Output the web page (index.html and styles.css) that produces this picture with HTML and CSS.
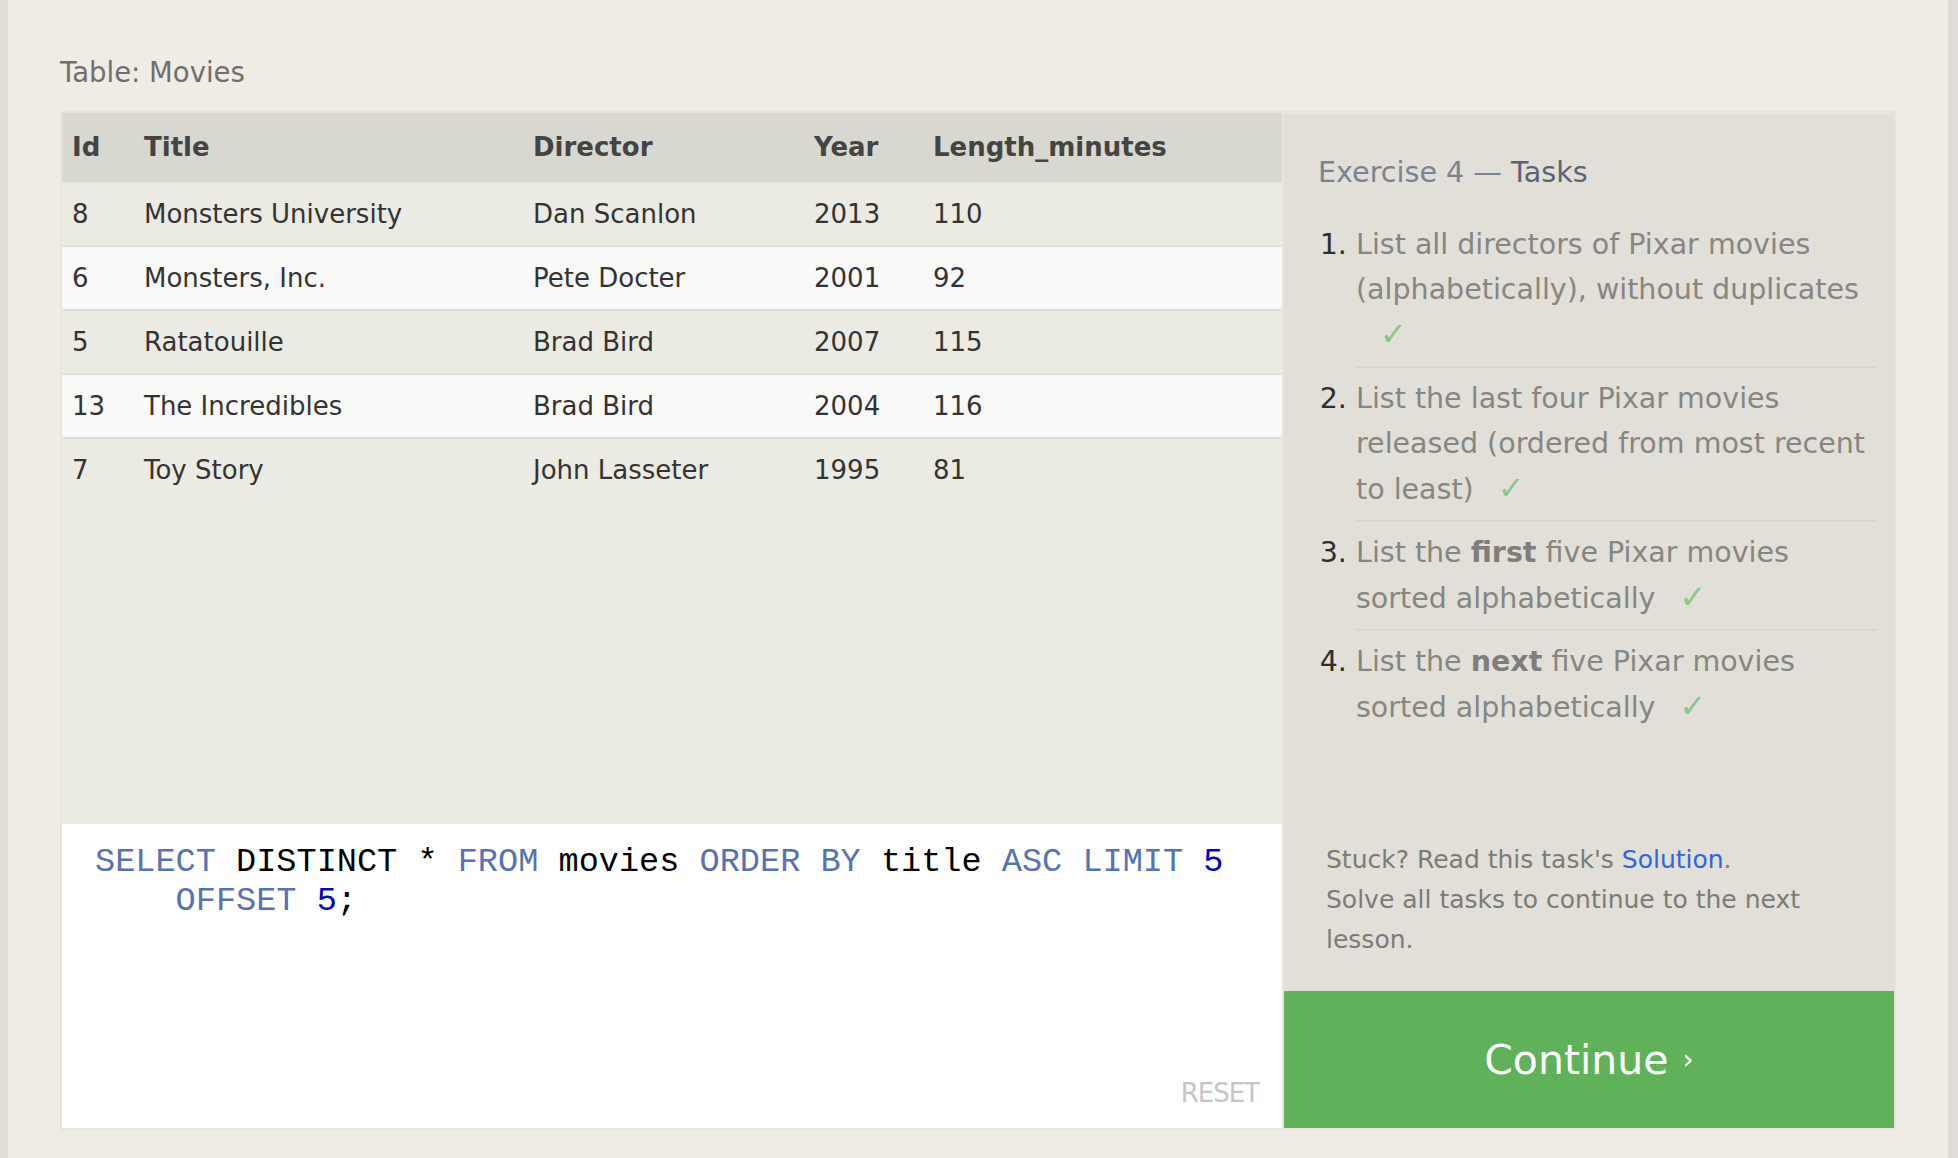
FILE: index.html
```html
<!DOCTYPE html>
<html lang="en">
<head>
<meta charset="utf-8">
<title>SQLBolt - Exercise 4</title>
<link rel="stylesheet" href="styles.css">
</head>
<body>
<div class="page">
  <div class="content">
    <div class="table-label">Table: Movies</div>
    <div class="widget">
      <div class="left">
        <div class="results">
          <table class="movies">
            <colgroup>
              <col class="col-id"><col class="col-title"><col class="col-dir"><col class="col-year"><col class="col-len">
            </colgroup>
            <thead>
              <tr><th>Id</th><th>Title</th><th>Director</th><th>Year</th><th>Length_minutes</th></tr>
            </thead>
            <tbody>
              <tr class="odd"><td>8</td><td>Monsters University</td><td>Dan Scanlon</td><td>2013</td><td>110</td></tr>
              <tr class="even"><td>6</td><td>Monsters, Inc.</td><td>Pete Docter</td><td>2001</td><td>92</td></tr>
              <tr class="odd"><td>5</td><td>Ratatouille</td><td>Brad Bird</td><td>2007</td><td>115</td></tr>
              <tr class="even"><td>13</td><td>The Incredibles</td><td>Brad Bird</td><td>2004</td><td>116</td></tr>
              <tr class="odd"><td>7</td><td>Toy Story</td><td>John Lasseter</td><td>1995</td><td>81</td></tr>
            </tbody>
          </table>
        </div>
        <div class="editor">
          <div class="code">
            <div class="code-line"><span class="kw">SELECT</span> DISTINCT * <span class="kw">FROM</span> movies <span class="kw">ORDER BY</span> title <span class="kw">ASC</span> <span class="kw">LIMIT</span> <span class="num">5</span></div>
            <div class="code-line wrapped"><span class="kw">OFFSET</span> <span class="num">5</span>;</div>
          </div>
          <div class="reset">RESET</div>
        </div>
      </div>
      <div class="tasks">
        <div class="tasks-title"><span class="ex">Exercise 4 —</span> <span class="tt">Tasks</span></div>
        <ol class="task-list">
          <li>List all directors of Pixar movies<br>(alphabetically), without duplicates<span class="check">✓</span></li>
          <li>List the last four Pixar movies<br>released (ordered from most recent<br>to least)<span class="check">✓</span></li>
          <li>List the <b>first</b> five Pixar movies<br>sorted alphabetically<span class="check">✓</span></li>
          <li>List the <b>next</b> five Pixar movies<br>sorted alphabetically<span class="check">✓</span></li>
        </ol>
        <div class="stuck">Stuck? Read this task's <a class="solution" href="#">Solution</a>.<br>Solve all tasks to continue to the next lesson.</div>
        <div class="continue">Continue<span class="chev">›</span></div>
      </div>
    </div>
  </div>
</div>
</body>
</html>
```

FILE: styles.css
```css
html, body {
  margin: 0;
  padding: 0;
}

body {
  background: #efece5;
  font-family: "DejaVu Sans", "Liberation Sans", sans-serif;
}

.page {
  display: flex;
  min-height: 1158px;
  box-sizing: border-box;
  border-left: 8px solid #e1ddd9;
  border-right: 10px solid #e0dcd8;
  background: #efece5;
}

.content {
  flex: 1;
  padding: 55px 52px 0 52px;
}

.table-label {
  font-size: 27.5px;
  line-height: 34px;
  color: #6f6f6d;
  margin-bottom: 22px;
}

.widget {
  display: flex;
  column-gap: 2px;
  padding: 2px;
  background: #e7e5de;
  height: 1019px;
  box-sizing: border-box;
}

.left {
  width: 1220px;
  display: flex;
  flex-direction: column;
}

.results {
  height: 711px;
  flex-shrink: 0;
  background: #ebeae3;
}

.movies {
  width: 100%;
  border-collapse: collapse;
  table-layout: fixed;
  font-size: 26px;
  color: #333333;
}

.col-id { width: 72px; }
.col-title { width: 389px; }
.col-dir { width: 281px; }
.col-year { width: 119px; }

.movies th {
  text-align: left;
  font-weight: bold;
  color: #444444;
  background: #d9d8d0;
  padding: 19px 0 19px 10px;
  line-height: 30px;
}

.movies td {
  padding: 16px 0 16px 10px;
  line-height: 30px;
  border-top: 2px solid #e0dfd9;
  white-space: nowrap;
}

.movies tr.odd td { background: #ebeae3; }
.movies tr.even td { background: #f9f9f8; }

.editor {
  flex: 1;
  min-height: 0;
  background: #ffffff;
  display: flex;
  flex-direction: column;
  padding: 19px 23px 20px 33px;
}

.code {
  font-family: "Liberation Mono", "Courier New", monospace;
  font-size: 33.6px;
  line-height: 39px;
  color: #000000;
}

.code-line {
  white-space: pre;
}

.code-line.wrapped {
  padding-left: 4ch;
}

.kw { color: #5771b4; }
.num { color: #0000c8; }

.reset {
  margin-top: auto;
  align-self: flex-end;
  font-size: 26px;
  line-height: 30px;
  letter-spacing: -1px;
  color: #c6c6c6;
}

.tasks {
  width: 610px;
  margin-top: 2px;
  background: #e1dfd8;
  display: flex;
  flex-direction: column;
  padding: 40px 0 0 0;
}

.tasks-title {
  font-size: 28.6px;
  line-height: 34px;
  padding-left: 34px;
  margin-bottom: 25px;
}

.tasks-title .ex { color: #7b8392; }
.tasks-title .tt { color: #5b6474; }

.task-list {
  margin: 0 17px 0 34px;
  padding: 0 0 0 38px;
  font-size: 28.5px;
  line-height: 45px;
  color: #878682;
}

.task-list li {
  padding: 8px 0;
  border-bottom: 2px solid #d8d6cd;
}

.task-list li:last-child {
  border-bottom: none;
}

.task-list li::marker {
  color: #2e2e2e;
}

.task-list b {
  font-weight: bold;
  color: #7f7e7a;
}

.check {
  display: inline-block;
  margin-left: 24px;
  font-size: 32px;
  line-height: 45px;
  color: #8cc78a;
}

.stuck {
  margin-top: auto;
  padding: 0 60px 31px 42px;
  font-size: 25px;
  line-height: 40px;
  color: #7d7b77;
}

.solution {
  color: #2f66d8;
  text-decoration: none;
}

.continue {
  height: 137px;
  background: #60b25a;
  color: #ffffff;
  font-size: 41px;
  display: flex;
  align-items: center;
  justify-content: center;
}

.chev {
  font-size: 28px;
  margin-left: 14px;
}
```
